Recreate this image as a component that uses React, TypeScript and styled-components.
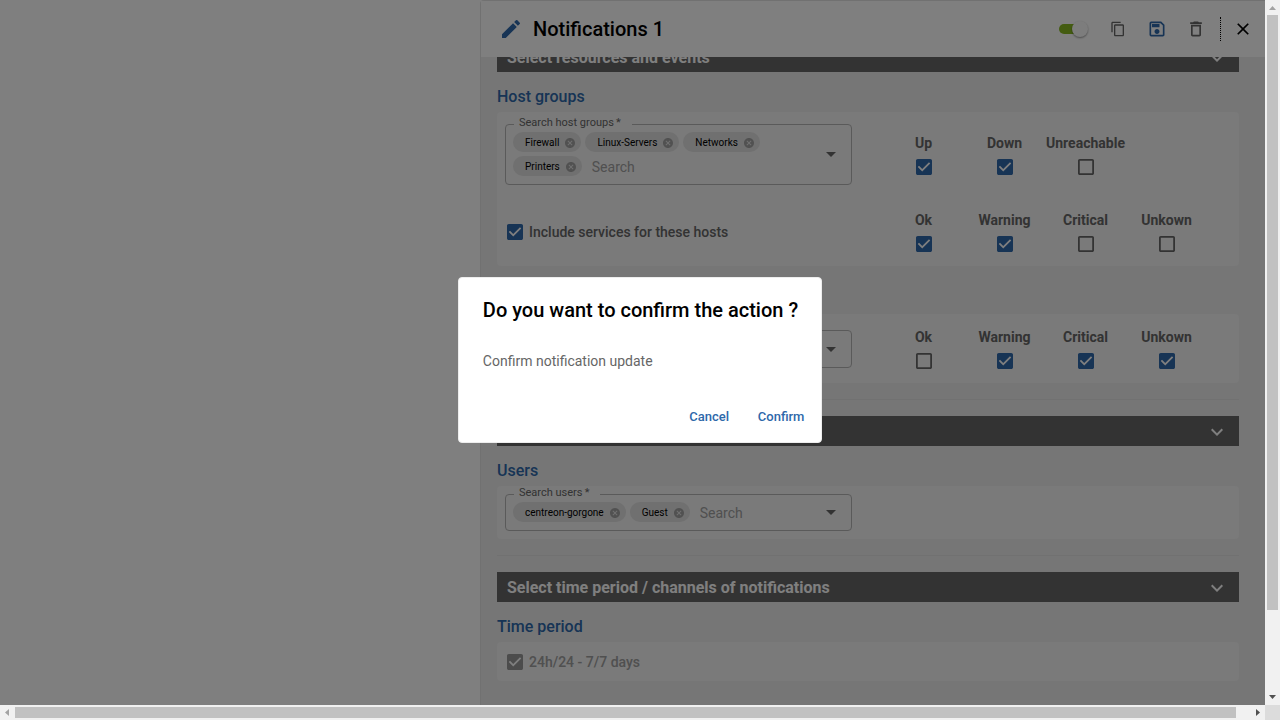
import React, { useState } from 'react';
import styled, { createGlobalStyle } from 'styled-components';
import {
  MdArrowDropDown,
  MdCancel,
  MdClose,
  MdContentCopy,
  MdDeleteOutline,
  MdEdit,
  MdExpandMore,
  MdOutlineSave,
} from 'react-icons/md';

const PRIMARY = '#2e68aa';
const TEXT = '#666666';

const GlobalStyle = createGlobalStyle`
  *, *::before, *::after { box-sizing: border-box; }
  body {
    margin: 0;
    overflow: hidden;
    background: #ffffff;
    color: #000000;
    font-family: Roboto, "Liberation Sans", sans-serif;
    font-size: 14px;
  }
  button, input { font-family: inherit; }
`;

const Viewport = styled.div`
  display: grid;
  grid-template-columns: minmax(0, 1fr) 15px;
  grid-template-rows: minmax(0, 1fr) 15px;
  height: 100vh;
`;

const ScrollArea = styled.div`
  overflow: hidden;
`;

const Workspace = styled.div`
  display: grid;
  grid-template-columns: 3fr 5fr;
  width: 100vw;
  height: 100%;
`;

const Panel = styled.section`
  grid-column: 2;
  display: flex;
  flex-direction: column;
  min-height: 0;
  border: 1px solid #e3e3e3;
  border-bottom: 0;
  border-top-left-radius: 4px;
  background: #ededed;
`;

const Header = styled.header`
  display: flex;
  align-items: center;
  flex: none;
  height: 56px;
  padding: 0 17px 0 18px;
  background: #ffffff;
  z-index: 1;
`;

const EditMark = styled(MdEdit)`
  width: 24px;
  height: 24px;
  margin-right: 10px;
  color: ${PRIMARY};
`;

const PanelTitle = styled.h1`
  flex: 1;
  margin: 0;
  font-size: 20px;
  font-weight: 500;
  line-height: 32px;
`;

const Switch = styled.label`
  position: relative;
  display: flex;
  align-items: center;
  width: 29px;
  height: 16px;
  margin-right: 10px;

  input {
    position: absolute;
    inset: 0;
    margin: 0;
    opacity: 0;
  }
`;

const SwitchTrack = styled.span`
  width: 26px;
  height: 10px;
  border-radius: 5px;
  background: #88b922;
`;

const SwitchThumb = styled.span`
  position: absolute;
  right: 0;
  width: 16px;
  height: 16px;
  border-radius: 50%;
  background: #fafafa;
  box-shadow: 0 1px 2px rgba(0, 0, 0, 0.4);
`;

const IconButton = styled.button<{ $size?: number; $color?: string }>`
  display: flex;
  align-items: center;
  justify-content: center;
  width: 39px;
  height: 36px;
  padding: 0;
  border: 0;
  background: none;
  color: ${({ $color }) => $color ?? TEXT};

  svg {
    width: ${({ $size }) => $size ?? 20}px;
    height: ${({ $size }) => $size ?? 20}px;
  }
`;

const Separator = styled.span`
  height: 24px;
  margin: 0 2px 0 5px;
  border-left: 1px dotted #000000;
`;

const PanelBody = styled.div`
  flex: 1;
  min-height: 0;
  overflow: hidden;
  padding: 0 40px 0 16px;
`;

const SectionList = styled.div`
  margin-top: -15px;
`;

const SectionBar = styled.button`
  display: flex;
  align-items: center;
  justify-content: space-between;
  width: 100%;
  height: 30px;
  padding: 2px 10px 0;
  border: 0;
  background: #666666;
  color: #ffffff;
  font-size: 16px;
  font-weight: 700;
  line-height: 24px;

  svg {
    width: 24px;
    height: 24px;
  }
`;

const GroupTitle = styled.h2`
  margin: 0;
  padding: 13px 0 3px;
  color: ${PRIMARY};
  font-size: 16px;
  font-weight: 500;
  line-height: 24px;
`;

const Card = styled.div<{ $padding: string; $after?: number }>`
  display: flex;
  flex-direction: column;
  gap: 9px;
  margin-bottom: ${({ $after }) => $after ?? 0}px;
  padding: ${({ $padding }) => $padding};
  border-radius: 4px;
  background: #f4f4f4;
`;

const Row = styled.div`
  display: grid;
  grid-template-columns: minmax(0, 1fr) 379px;
  align-items: center;
`;

const Divider = styled.hr`
  height: 1px;
  margin: 16px 0;
  border: 0;
  background: #e3e3e3;
`;

const Field = styled.fieldset`
  min-width: 0;
  margin: 0 0 8px;
  padding: 0 8px 8px 7px;
  border: 1px solid #b5b5b5;
  border-radius: 4px;
`;

const FieldLabel = styled.legend`
  margin-left: 1px;
  padding: 1px 11px 3px 5px;
  color: ${TEXT};
  font-size: 11px;
  line-height: 12px;
`;

const FieldContent = styled.div`
  display: flex;
  align-items: center;
`;

const ChipList = styled.div`
  display: flex;
  flex: 1;
  flex-wrap: wrap;
  gap: 4px;
  min-width: 0;
`;

const ChipBox = styled.span`
  display: flex;
  align-items: center;
  gap: 5px;
  height: 20px;
  padding: 1px 5px 0 12px;
  border-radius: 10px;
  background: #e0e0e0;
  font-size: 10px;
  line-height: 20px;
`;

const ChipRemove = styled.button`
  display: flex;
  padding: 0;
  border: 0;
  background: none;
  color: #a2a2a2;

  svg {
    width: 12px;
    height: 12px;
  }
`;

const SearchInput = styled.input`
  flex: 1;
  width: 0;
  min-width: 60px;
  height: 20px;
  padding: 2px 0 0 6px;
  border: 0;
  background: none;
  font-size: 14px;
  outline: 0;

  &::placeholder {
    color: #a0a0a0;
    opacity: 1;
  }
`;

const OpenButton = styled.button`
  display: flex;
  align-items: center;
  width: 24px;
  height: 20px;
  margin-left: 24px;
  padding: 0;
  border: 0;
  background: none;
  color: ${TEXT};

  svg {
    flex: none;
    width: 24px;
    height: 24px;
  }
`;

const EventGrid = styled.div`
  display: grid;
  grid-template-columns: repeat(4, 81px);
  justify-content: end;
  padding: 10px 24px 10px 0;
`;

const EventLabel = styled.label`
  display: flex;
  flex-direction: column;
  align-items: center;
  gap: 8px;
  color: ${TEXT};
  font-weight: 700;
  line-height: 16px;
`;

const InlineLabel = styled.label<{ $disabled?: boolean }>`
  display: flex;
  align-items: center;
  gap: 6px;
  padding-left: 2px;
  color: ${({ $disabled }) => ($disabled ? '#a0a0a0' : TEXT)};
  font-weight: 500;
  line-height: 18px;
`;

const CheckSlot = styled.span<{ $color: string }>`
  position: relative;
  display: flex;
  width: 16px;
  height: 16px;
  color: ${({ $color }) => $color};

  input {
    position: absolute;
    inset: 0;
    width: 16px;
    height: 16px;
    margin: 0;
    opacity: 0;
  }
`;

const Backdrop = styled.div`
  position: fixed;
  inset: 0;
  display: flex;
  align-items: center;
  justify-content: center;
  background: rgba(0, 0, 0, 0.5);
  z-index: 2;
`;

const Dialog = styled.div`
  border: 1px solid #ededed;
  border-radius: 4px;
  background: #ffffff;
`;

const DialogTitle = styled.h2`
  margin: 0;
  padding: 16px 23px 16px 24px;
  font-size: 20px;
  font-weight: 500;
  line-height: 32px;
`;

const DialogText = styled.p`
  margin: 0;
  padding: 9px 24px 27px;
  color: ${TEXT};
  font-size: 14px;
  line-height: 20px;
`;

const DialogActions = styled.div`
  display: flex;
  justify-content: flex-end;
  gap: 8px;
  padding: 0 8px 8px;
`;

const TextButton = styled.button`
  min-width: 64px;
  height: 36px;
  padding: 0 4px;
  border: 0;
  background: none;
  color: ${PRIMARY};
  font-size: 13px;
  font-weight: 500;
`;

const ScrollTrack = styled.div<{ $vertical?: boolean }>`
  display: flex;
  flex-direction: ${({ $vertical }) => ($vertical ? 'column' : 'row')};
  background: #f1f1f1;
  z-index: 3;
`;

const ScrollLane = styled.div<{ $vertical?: boolean }>`
  display: flex;
  flex-direction: ${({ $vertical }) => ($vertical ? 'column' : 'row')};
  flex: 1;
  padding: ${({ $vertical }) => ($vertical ? '0 2px' : '2px 0')};
`;

const ScrollThumb = styled.div<{ $shown: number; $total: number }>`
  flex: 0 0 calc(100% * ${({ $shown }) => $shown} / ${({ $total }) => $total});
  background: #c1c1c1;
`;

const ScrollArrow = styled.svg`
  flex: none;
  width: 15px;
  height: 15px;
`;

const ScrollCorner = styled.div`
  background: #dcdcdc;
  z-index: 3;
`;

const CHECKED_PATH =
  'M19 3H5c-1.11 0-2 .9-2 2v14c0 1.1.89 2 2 2h14c1.11 0 2-.9 2-2V5c0-1.1-.89-2-2-2zm-9 14l-5-5 1.41-1.41L10 14.17l7.59-7.59L19 8l-9 9z';
const UNCHECKED_PATH =
  'M19 5v14H5V5h14m0-2H5c-1.1 0-2 .9-2 2v14c0 1.1.9 2 2 2h14c1.1 0 2-.9 2-2V5c0-1.1-.9-2-2-2z';

function Check({ initial, disabled }: { initial?: boolean; disabled?: boolean }) {
  const [checked, setChecked] = useState(Boolean(initial));
  const color = disabled ? '#999999' : checked ? PRIMARY : TEXT;
  return (
    <CheckSlot $color={color}>
      <input
        type="checkbox"
        checked={checked}
        disabled={disabled}
        onChange={(e) => setChecked(e.target.checked)}
      />
      <svg viewBox="3 3 18 18" width="16" height="16" fill="currentColor" aria-hidden="true">
        {checked && <path d="M4 4h16v16H4z" fill="#ffffff" />}
        <path d={checked ? CHECKED_PATH : UNCHECKED_PATH} />
      </svg>
    </CheckSlot>
  );
}

function Events({ items }: { items: Array<[string, boolean]> }) {
  return (
    <EventGrid>
      {items.map(([name, on]) => (
        <EventLabel key={name}>
          {name}
          <Check initial={on} />
        </EventLabel>
      ))}
    </EventGrid>
  );
}

function MultiSelect({ label, values }: { label: string; values: string[] }) {
  return (
    <Field>
      <FieldLabel>{label}&thinsp;*</FieldLabel>
      <FieldContent>
        <ChipList>
          {values.map((value) => (
            <ChipBox key={value}>
              {value}
              <ChipRemove type="button" aria-label={`Remove ${value}`}>
                <MdCancel />
              </ChipRemove>
            </ChipBox>
          ))}
          <SearchInput placeholder="Search" aria-label={label} />
        </ChipList>
        <OpenButton type="button" aria-label="Open">
          <MdArrowDropDown />
        </OpenButton>
      </FieldContent>
    </Field>
  );
}

function Section({ title }: { title: string }) {
  return (
    <SectionBar type="button">
      {title}
      <MdExpandMore />
    </SectionBar>
  );
}

export default function App() {
  const [open, setOpen] = useState(true);
  const close = () => setOpen(false);

  return (
    <>
      <GlobalStyle />
      <Viewport>
        <ScrollArea>
          <Workspace>
            <Panel>
              <Header>
                <EditMark />
                <PanelTitle>Notifications 1</PanelTitle>
                <Switch>
                  <input type="checkbox" defaultChecked aria-label="Active" />
                  <SwitchTrack />
                  <SwitchThumb />
                </Switch>
                <IconButton type="button" aria-label="Duplicate" $size={16}>
                  <MdContentCopy />
                </IconButton>
                <IconButton type="button" aria-label="Save" $color={PRIMARY}>
                  <MdOutlineSave />
                </IconButton>
                <IconButton type="button" aria-label="Delete">
                  <MdDeleteOutline />
                </IconButton>
                <Separator />
                <IconButton type="button" aria-label="Close" $color="#000000">
                  <MdClose />
                </IconButton>
              </Header>
              <PanelBody>
                <SectionList>
                  <Section title="Select resources and events" />
                  <GroupTitle>Host groups</GroupTitle>
                  <Card $padding="4px 8px" $after={8}>
                    <Row>
                      <MultiSelect
                        label="Search host groups"
                        values={['Firewall', 'Linux-Servers', 'Networks', 'Printers']}
                      />
                      <Events items={[['Up', true], ['Down', true], ['Unreachable', false]]} />
                    </Row>
                    <Row>
                      <InlineLabel>
                        <Check initial />
                        Include services for these hosts
                      </InlineLabel>
                      <Events
                        items={[['Ok', true], ['Warning', true], ['Critical', false], ['Unkown', false]]}
                      />
                    </Row>
                  </Card>
                  <GroupTitle>Service groups</GroupTitle>
                  <Card $padding="5px 8px 4px">
                    <Row>
                      <MultiSelect label="Search service groups" values={[]} />
                      <Events
                        items={[['Ok', false], ['Warning', true], ['Critical', true], ['Unkown', true]]}
                      />
                    </Row>
                  </Card>
                  <Divider />
                  <Section title="Select users" />
                  <GroupTitle>Users</GroupTitle>
                  <Card $padding="0 8px">
                    <Row>
                      <MultiSelect label="Search users" values={['centreon-gorgone', 'Guest']} />
                    </Row>
                  </Card>
                  <Divider />
                  <Section title="Select time period / channels of notifications" />
                  <GroupTitle>Time period</GroupTitle>
                  <Card $padding="11px 8px 10px">
                    <InlineLabel $disabled>
                      <Check initial disabled />
                      24h/24 - 7/7 days
                    </InlineLabel>
                  </Card>
                </SectionList>
              </PanelBody>
            </Panel>
          </Workspace>
        </ScrollArea>
        <ScrollTrack $vertical>
          <ScrollArrow viewBox="0 0 15 15">
            <path d="M4 10h7L7.500 6z" fill="#a3a3a3" />
          </ScrollArrow>
          <ScrollLane $vertical>
            <ScrollThumb $shown={705} $total={800} />
          </ScrollLane>
          <ScrollArrow viewBox="0 0 15 15">
            <path d="M4 5h7L7.500 9z" fill="#505050" />
          </ScrollArrow>
        </ScrollTrack>
        <ScrollTrack>
          <ScrollArrow viewBox="0 0 15 15">
            <path d="M9 4v7L5 7.500z" fill="#a3a3a3" />
          </ScrollArrow>
          <ScrollLane>
            <ScrollThumb $shown={1265} $total={1280} />
          </ScrollLane>
          <ScrollArrow viewBox="0 0 15 15">
            <path d="M6 4v7l4-3.500z" fill="#505050" />
          </ScrollArrow>
        </ScrollTrack>
        <ScrollCorner />
      </Viewport>
      {open && (
        <Backdrop>
          <Dialog role="dialog" aria-modal="true" aria-labelledby="confirm-title">
            <DialogTitle id="confirm-title">Do you want to confirm the action ?</DialogTitle>
            <DialogText>Confirm notification update</DialogText>
            <DialogActions>
              <TextButton type="button" onClick={close}>
                Cancel
              </TextButton>
              <TextButton type="button" onClick={close}>
                Confirm
              </TextButton>
            </DialogActions>
          </Dialog>
        </Backdrop>
      )}
    </>
  );
}
